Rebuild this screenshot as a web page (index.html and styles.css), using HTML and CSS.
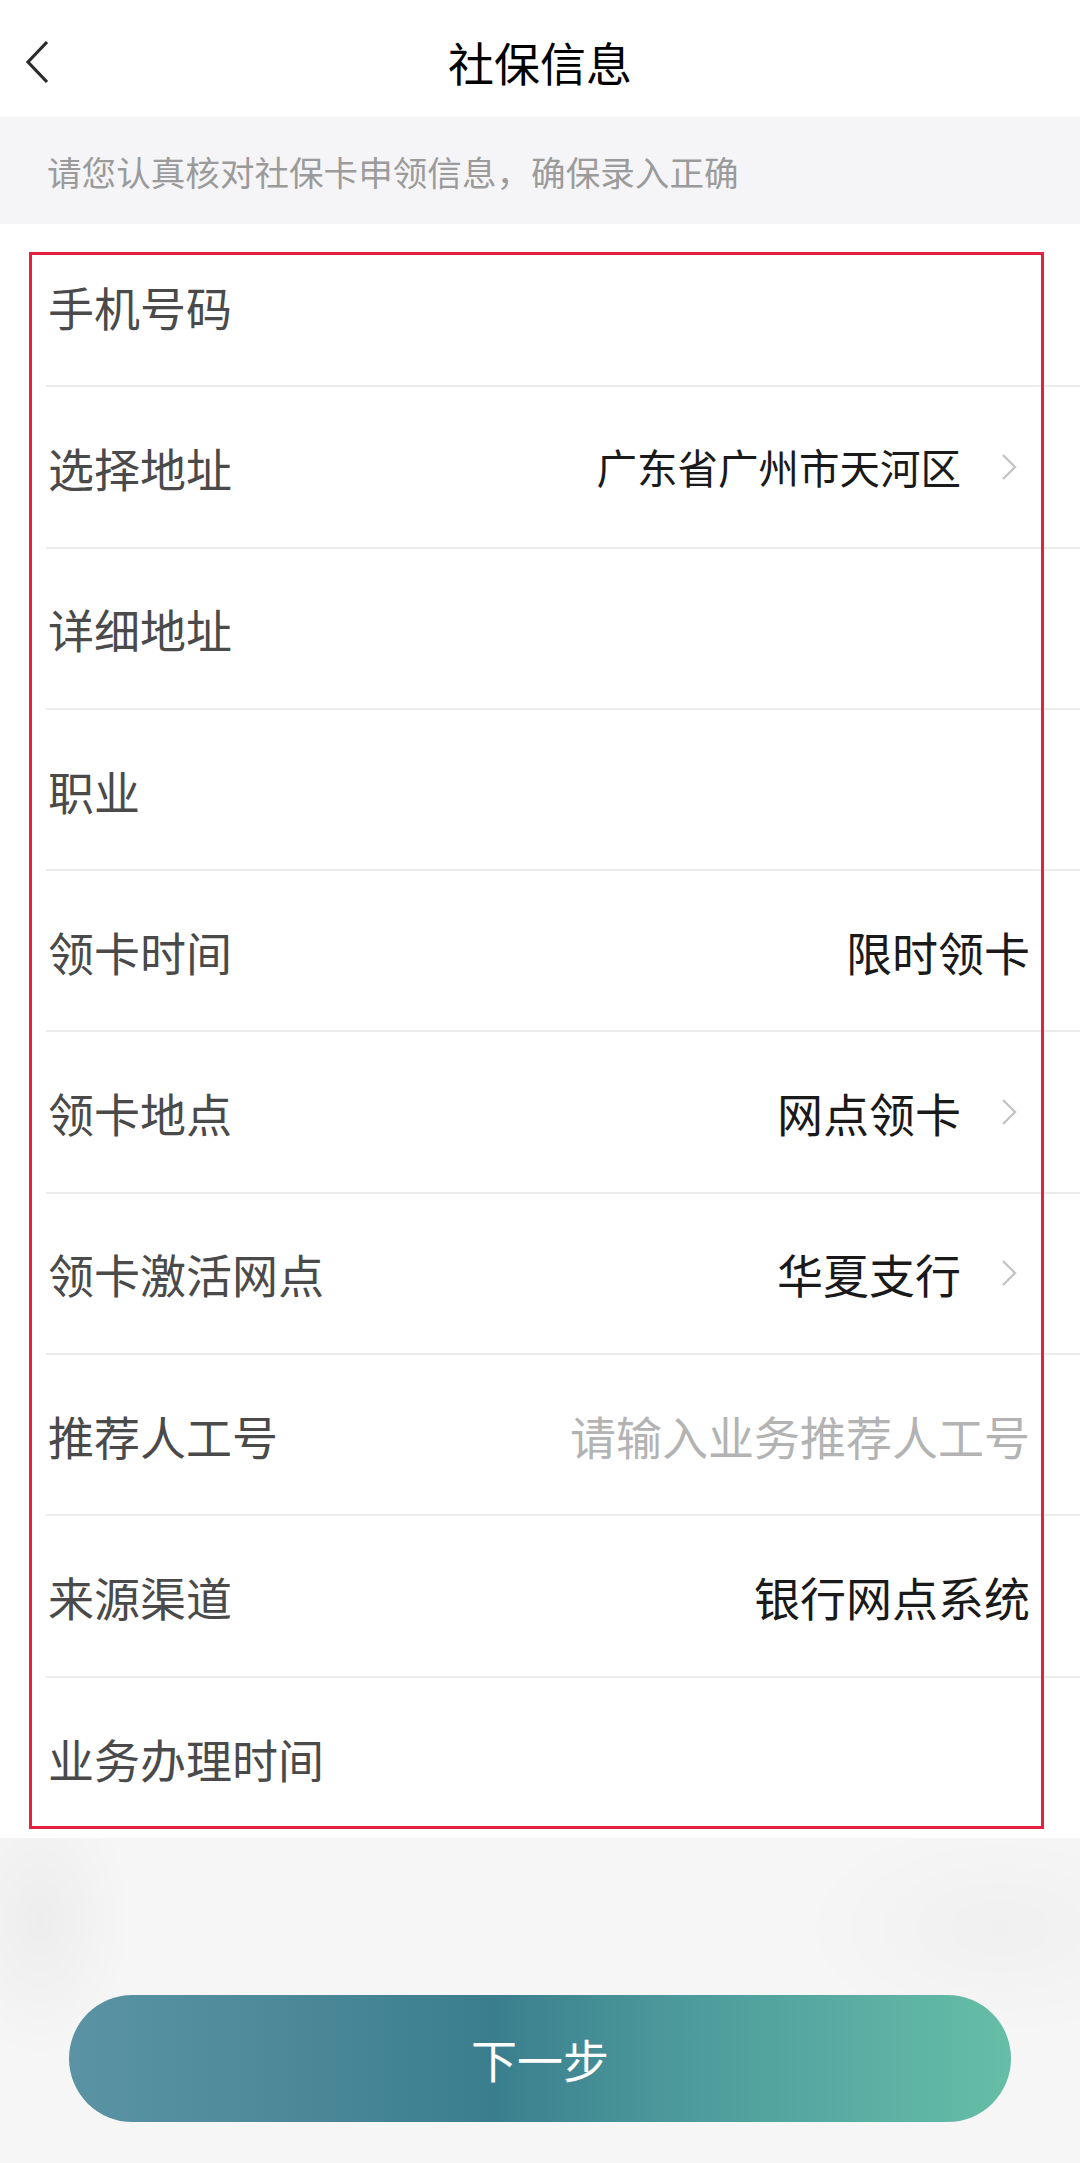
FILE: index.html
```html
<!DOCTYPE html>
<html lang="zh-CN">
<head>
    <meta charset="UTF-8">
    <meta name="viewport" content="width=device-width, initial-scale=1.0">
    <title>社保信息</title>
    <link rel="stylesheet" href="styles.css">
</head>
<body>
    <div class="page">
        <!-- 顶部导航 -->
        <header class="nav">
            <a href="#" class="nav-back">
                <svg width="28" height="44" viewBox="0 0 28 44"><path d="M24 2 L5 22 L24 42" fill="none" stroke="#2b2b2b" stroke-width="3.2" stroke-linejoin="miter"/></svg>
            </a>
            <h1 class="nav-title">社保信息</h1>
        </header>

        <div class="notice">请您认真核对社保卡申领信息，确保录入正确</div>

        <!-- 申领信息 -->
        <div class="form-list">
            <div class="row">
                <span class="label">手机号码</span>
                <span class="value"></span>
            </div>
            <div class="row">
                <span class="label">选择地址</span>
                <span class="value small">广东省广州市天河区</span>
                <svg class="arrow" width="16" height="28" viewBox="0 0 16 28"><path d="M2 2 L14 14 L2 26" fill="none" stroke="#c4c4c4" stroke-width="2.4"/></svg>
            </div>
            <div class="row">
                <span class="label">详细地址</span>
                <span class="value"></span>
            </div>
            <div class="row">
                <span class="label">职业</span>
                <span class="value"></span>
            </div>
            <div class="row">
                <span class="label">领卡时间</span>
                <span class="value">限时领卡</span>
            </div>
            <div class="row">
                <span class="label">领卡地点</span>
                <span class="value">网点领卡</span>
                <svg class="arrow" width="16" height="28" viewBox="0 0 16 28"><path d="M2 2 L14 14 L2 26" fill="none" stroke="#c4c4c4" stroke-width="2.4"/></svg>
            </div>
            <div class="row">
                <span class="label">领卡激活网点</span>
                <span class="value">华夏支行</span>
                <svg class="arrow" width="16" height="28" viewBox="0 0 16 28"><path d="M2 2 L14 14 L2 26" fill="none" stroke="#c4c4c4" stroke-width="2.4"/></svg>
            </div>
            <div class="row">
                <span class="label">推荐人工号</span>
                <span class="value placeholder">请输入业务推荐人工号</span>
            </div>
            <div class="row">
                <span class="label">来源渠道</span>
                <span class="value">银行网点系统</span>
            </div>
            <div class="row last">
                <span class="label">业务办理时间</span>
                <span class="value"></span>
            </div>

            <!-- 标注框 -->
            <div class="highlight"></div>
        </div>

        <div class="footer">
            <button class="btn-next">下一步</button>
        </div>
    </div>
</body>
</html>
```

FILE: styles.css
```css
body {
    margin: 0;
    font-family: "Noto Sans CJK SC", "Noto Sans", sans-serif;
    background: #f6f6f6;
}
.page {
    width: 1080px;
    height: 2163px;
    display: flex;
    flex-direction: column;
    overflow: hidden;
}
.nav {
    position: relative;
    height: 117px;
    background: #ffffff;
    display: flex;
    align-items: center;
    justify-content: center;
}
.nav-back {
    position: absolute;
    left: 23px;
    top: 40px;
    display: flex;
}
.nav-title {
    margin: 0;
    font-size: 46px;
    font-weight: 400;
    color: #000;
    line-height: 1;
    padding-top: 4px;
}
.notice {
    height: 107px;
    background: #f5f5f7;
    color: #9b9b9b;
    font-size: 34.6px;
    padding-left: 47px;
    display: flex;
    align-items: center;
    box-sizing: border-box;
}
.form-list {
    position: relative;
    background: #ffffff;
    padding-top: 2px;
}
.row {
    height: 161.3px;
    margin-left: 46px;
    padding-right: 50px;
    border-bottom: 2px solid #ebebeb;
    display: flex;
    align-items: center;
    box-sizing: border-box;
}
.row.last {
    height: 160px;
    border-bottom: none;
}
.label {
    flex: 1;
    padding-left: 2px;
    font-size: 46px;
    color: #4a4a4a;
}
.value {
    font-size: 46px;
    color: #1a1a1a;
}
.value.small {
    font-size: 40.5px;
}
.value.placeholder {
    color: #b3b3b3;
}
.arrow {
    margin-left: 40px;
    margin-right: 13px;
}
.highlight {
    position: absolute;
    left: 29px;
    top: 28px;
    width: 1015px;
    height: 1577px;
    border: 3px solid #e51f3e;
    box-sizing: border-box;
    pointer-events: none;
}
.footer {
    flex: 1;
    background:
        radial-gradient(ellipse 90px 140px at 40px 80px, rgba(0, 0, 0, 0.035), transparent),
        radial-gradient(ellipse 200px 110px at 1000px 90px, rgba(0, 0, 0, 0.025), transparent),
        #f6f6f6;
    padding-top: 157px;
    box-sizing: border-box;
}
.btn-next {
    display: block;
    margin: 0 69px;
    width: 942px;
    height: 127px;
    border: none;
    border-radius: 64px;
    background: linear-gradient(90deg, #5a93a4 0%, #4a8898 25%, #3a7e8e 45%, #4a9699 62%, #57aaa2 80%, #66bea6 100%);
    color: #ffffff;
    font-family: inherit;
    font-size: 46px;
    cursor: pointer;
}
```
